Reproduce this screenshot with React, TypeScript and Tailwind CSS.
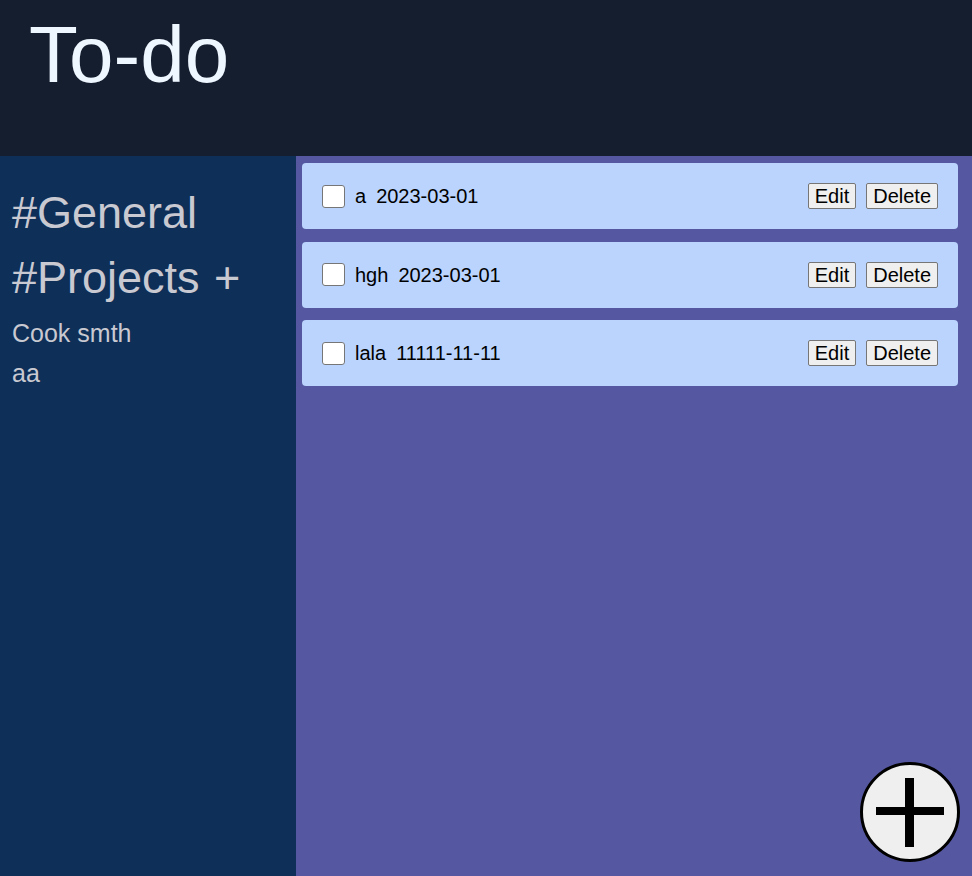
import { useState } from "react";

type Todo = { id: number; title: string; date: string; done: boolean };

const initialTodos: Todo[] = [
  { id: 1, title: "a", date: "2023-03-01", done: false },
  { id: 2, title: "hgh", date: "2023-03-01", done: false },
  { id: 3, title: "lala", date: "11111-11-11", done: false },
];

function TodoCard({ todo, onToggle, onDelete }: { todo: Todo; onToggle: () => void; onDelete: () => void }) {
  return (
    <div className="flex items-center justify-between h-[66px] rounded-[4px] bg-[#bad4fd] px-5 text-[20px] text-black">
      <div className="flex items-center gap-[10px]">
        <input
          type="checkbox"
          checked={todo.done}
          onChange={onToggle}
          className="m-0 w-[23px] h-[23px] appearance-none rounded-[3px] border border-[#767676] bg-white checked:bg-[#0075ff]"
        />
        <span>{todo.title}</span>
        <span>{todo.date}</span>
      </div>
      <div className="flex items-center gap-[10px]">
        <button className="h-[26px] px-[6px] leading-none bg-[#efefef] border border-[#767676] rounded-[2px]">Edit</button>
        <button onClick={onDelete} className="h-[26px] px-[6px] leading-none bg-[#efefef] border border-[#767676] rounded-[2px]">
          Delete
        </button>
      </div>
    </div>
  );
}

export default function App() {
  const [todos, setTodos] = useState<Todo[]>(initialTodos);

  const toggle = (id: number) => setTodos(todos.map((t) => (t.id === id ? { ...t, done: !t.done } : t)));
  const remove = (id: number) => setTodos(todos.filter((t) => t.id !== id));

  return (
    <div className="min-h-screen flex flex-col font-['Liberation_Sans',Arial,sans-serif]">
      {/* Header */}
      <header className="h-[156px] shrink-0 bg-[#141e2f] pl-[29px] pt-[15px]">
        <h1 className="text-[80px] leading-none text-[#eef6ff]">To-do</h1>
      </header>

      <div className="flex flex-1">
        {/* Sidebar */}
        <aside className="w-[296px] shrink-0 bg-[#0e2f58] pl-3 pt-[24px] text-[#c9c9d1]">
          <div className="text-[45px] leading-[65px]">#General</div>
          <div className="text-[45px] leading-[65px]">
            #Projects <span className="ml-[2px]">+</span>
          </div>
          <div className="mt-[3px] text-[25px] leading-[40px]">Cook smth</div>
          <div className="text-[25px] leading-[40px]">aa</div>
        </aside>

        {/* Todo list */}
        <main className="flex-1 bg-[#5558a1] pl-[6px] pr-[14px] pt-[7px]">
          <div className="flex flex-col gap-[12.5px]">
            {todos.map((t) => (
              <TodoCard key={t.id} todo={t} onToggle={() => toggle(t.id)} onDelete={() => remove(t.id)} />
            ))}
          </div>
        </main>
      </div>

      {/* Add button */}
      <button className="fixed right-[12px] bottom-[14px] w-[100px] h-[100px] rounded-full border-[3px] border-black bg-[#efefef] flex items-center justify-center">
        <svg width="70" height="70" viewBox="0 0 70 70">
          <rect x="1" y="30" width="68" height="8" fill="#000" />
          <rect x="30" y="1" width="9" height="69" fill="#000" />
        </svg>
      </button>
    </div>
  );
}
